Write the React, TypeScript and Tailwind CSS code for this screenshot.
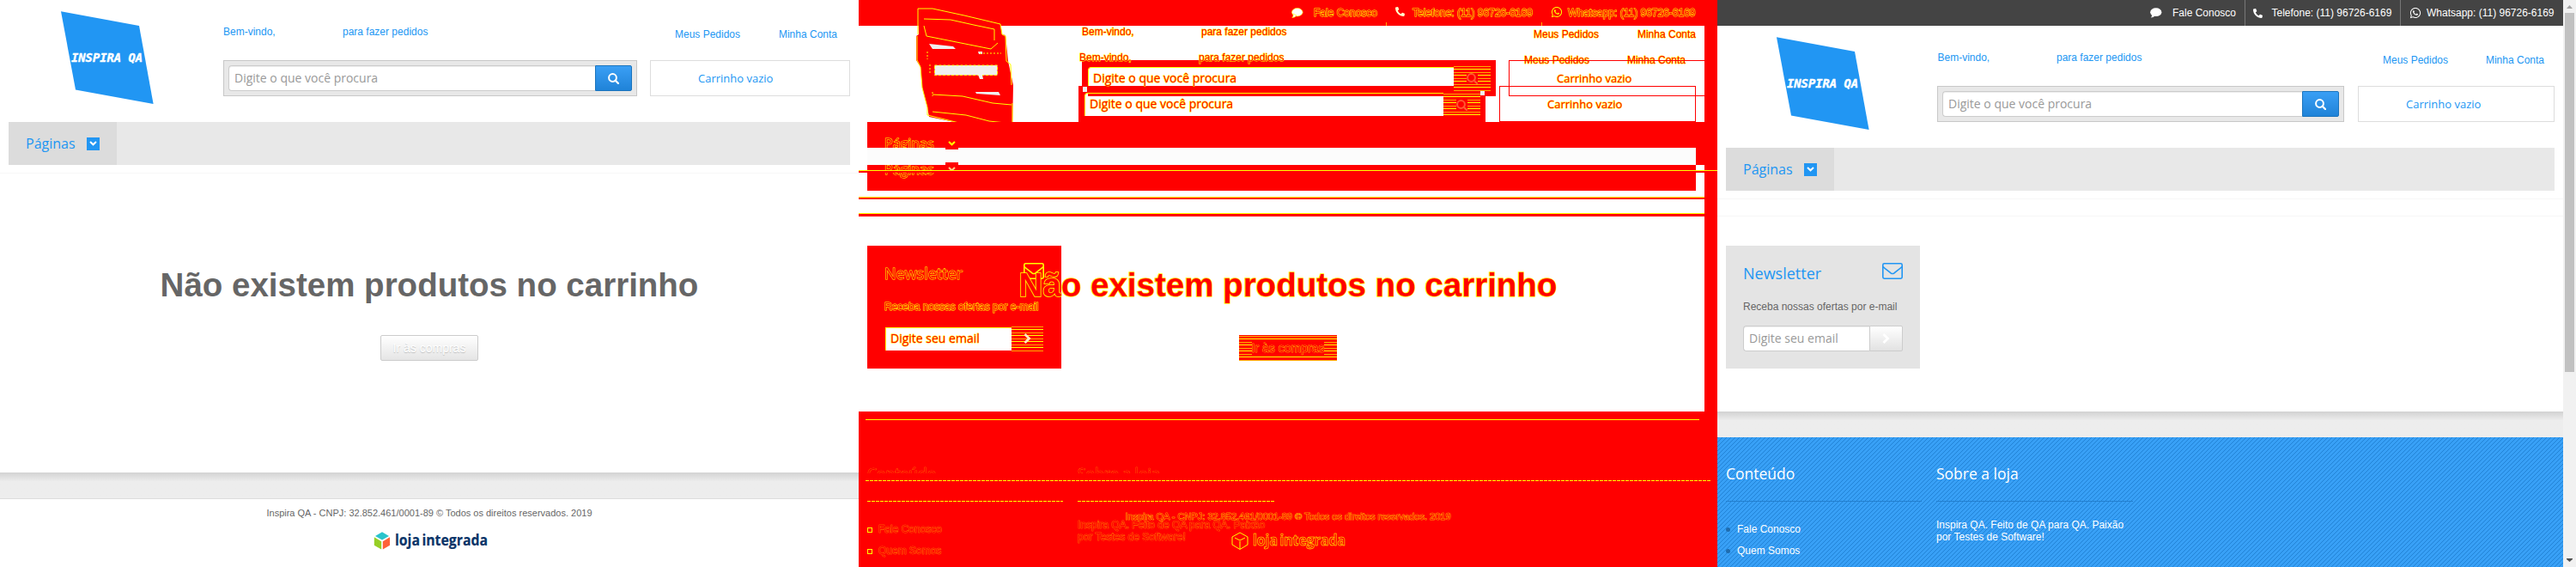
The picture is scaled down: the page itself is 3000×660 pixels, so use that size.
import React from "react";
import { FaPhoneAlt, FaWhatsapp } from "react-icons/fa";

const SANS = "font-['Liberation_Sans',Arial,sans-serif]";
const OPEN = "font-['Open_Sans','Noto_Sans',sans-serif]";

function StoreLogo({ className }: { className: string }) {
  return (
    <svg className={className} width="110" height="110" viewBox="0 0 110 110">
      <polygon points="0,0.3 91,17 107.6,108 17,91.5" fill="#2196f3" />
      <text
        x="12"
        y="58.5"
        textLength="83"
        lengthAdjust="spacingAndGlyphs"
        fontFamily="'DejaVu Sans Mono', monospace"
        fontWeight="bold"
        fontStyle="italic"
        fontSize="13.8"
        fill="#fff"
        stroke="#fff"
        strokeWidth="0.4"
      >
        INSPIRA QA
      </text>
    </svg>
  );
}

function SearchIcon({ color = "#fff" }: { color?: string }) {
  return (
    <svg width="13" height="13" viewBox="0 0 13 13" fill="none" stroke={color}>
      <circle cx="5.5" cy="5.5" r="4.4" strokeWidth="2" />
      <path d="M8.7 8.7 L12 12" strokeWidth="2.3" strokeLinecap="round" />
    </svg>
  );
}

function Chevron({ right = false, color = "#fff" }: { right?: boolean; color?: string }) {
  return right ? (
    <svg width="9" height="12" viewBox="0 0 9 12" fill="none" stroke={color} strokeWidth="2.8">
      <path d="M1.5 1 L6.6 6 L1.5 11" />
    </svg>
  ) : (
    <svg width="9" height="6" viewBox="0 0 9 6" fill="none" stroke={color} strokeWidth="2">
      <path d="M1 1 L4.5 4.3 L8 1" />
    </svg>
  );
}

function Envelope({ color }: { color: string }) {
  return (
    <svg width="24" height="19" viewBox="0 0 24 19" fill="none" stroke={color} strokeWidth="1.6">
      <rect x="0.8" y="0.8" width="22.4" height="17.4" rx="1.6" />
      <path d="M1 4.5 C4 7.5 8 10 10 11.8 Q12 13.2 14 11.8 C16 10 20 7.5 23 4.5" />
    </svg>
  );
}

function Brand({ outline = false }: { outline?: boolean }) {
  return (
    <svg width="134" height="26" viewBox="0 -3 134 26" className="block overflow-visible">
      {outline ? (
        <path d="M1 6 L10 1 L19 6 V15 L10 20.5 L1 15 Z M10 11 V20 M4 7 L10 10 L16 7" fill="none" stroke="#ff0" />
      ) : (
        <g>
          <polygon points="10,0.3 18,5 10,9.6 2,5" fill="#29c4cc" />
          <polygon points="0.8,6.3 9.2,11.2 9.2,20.5 0.8,15.8" fill="#97cf26" />
          <polygon points="19,6.3 10.8,11.2 10.8,20.5 19,15.8" fill="#ff6238" />
        </g>
      )}
      <text
        x="25"
        y="16"
        textLength="108"
        lengthAdjust="spacingAndGlyphs"
        fontFamily="'Open Sans', 'Noto Sans', sans-serif"
        fontWeight="bold"
        fontSize="18.5"
        wordSpacing="-2"
        fill={outline ? "none" : "#0a3468"}
        stroke={outline ? "#ff0" : "#0a3468"}
        strokeWidth={outline ? 0.6 : 0.2}
      >
        loja integrada
      </text>
    </svg>
  );
}

function StoreHeader({ shop }: { shop: boolean }) {
  return (
    <header>
      <div className="flex h-[142px] items-start">
        <div className={shop ? "w-[256px] pl-[69px] pt-[13px]" : "w-[260px] pl-[71px] pt-[13px]"}>
          <StoreLogo className="block" />
        </div>
        <div className={shop ? "w-[474px]" : "w-[482px]"}>
          <div className={`flex h-[70px] pt-[27px] text-xs leading-5 text-[#2196f3] ${SANS}`}>
            <span className={shop ? "w-[139px] pl-[0.5px]" : "w-[139px]"}>Bem-vindo,</span>
            <span>para fazer pedidos</span>
          </div>
          <div className="flex h-[42px] border border-[#c8c8c8] bg-[#e8e8e8] p-[5px]">
            <div
              className={`h-[30px] flex-1 rounded-l border border-r-0 border-[#ccc] bg-white pl-1.5 text-sm leading-[27px] text-[#999] shadow-[inset_0_1px_1px_rgba(0,0,0,0.075)] ${OPEN}`}
            >
              Digite o que você procura
            </div>
            <div className="flex h-[30px] w-[43px] items-center justify-center rounded-r-[2px] border border-[#1b74bd] bg-linear-to-b from-[#3a9ff5] to-[#1f83d8]">
              <SearchIcon />
            </div>
          </div>
        </div>
        <div className={shop ? "ml-4 w-[229px]" : "ml-[15px] w-[233px]"}>
          <div
            className={`flex h-[70px] justify-between pt-[30px] text-xs leading-5 text-[#2196f3] ${SANS} ${
              shop ? "pl-[29px] pr-[12px]" : "pl-[29px] pr-[15px]"
            }`}
          >
            <span>Meus Pedidos</span>
            <span>Minha Conta</span>
          </div>
          <div className={`h-[42px] border border-[#ddd] pl-[55px] text-[13px] leading-10 text-[#2196f3] ${OPEN}`}>
            Carrinho vazio
          </div>
        </div>
      </div>
      <nav className="mx-2.5 h-[50px] bg-[#e8e8e8]">
        <div className="flex h-full w-[126px] items-center bg-[#dcdcdc] pl-5">
          <span className={`w-[71px] text-base leading-[50px] text-[#2196f3] ${OPEN}`}>Páginas</span>
          <span className="flex h-[15px] w-[15px] items-center justify-center bg-[#2196f3]">
            <Chevron />
          </span>
        </div>
      </nav>
    </header>
  );
}

function CartPage() {
  return (
    <section className="flex h-full w-[1000px] flex-col bg-white">
      <StoreHeader shop={false} />
      <div className="h-[9px]" />
      <div className="flex h-[349px] shrink-0 flex-col items-center">
        <div className="h-px w-full bg-[#f7f7f7]" />
        <h1 className={`mt-[110px] text-[38.5px] font-bold leading-[40px] text-[#666] ${SANS}`}>
          Não existem produtos no carrinho
        </h1>
        <div
          className={`mt-[38px] h-[30px] w-[114px] rounded-[2px] border border-[#ccc] bg-linear-to-b from-white to-[#e5e5e5] text-center text-sm leading-7 text-white [text-shadow:0_1px_1px_rgba(0,0,0,0.2)] ${SANS}`}
        >
          Ir às compras
        </div>
      </div>
      <div className="h-[30px] shrink-0 bg-linear-to-b from-[#d2d2d2] via-[#ededed] via-35% to-[#ededed]" />
      <footer className="flex flex-1 flex-col items-center border-t border-[#ddd]">
        <p className={`mt-[6px] text-[11px] leading-5 text-[#666] ${SANS}`}>
          Inspira QA - CNPJ: 32.852.461/0001-89 © Todos os direitos reservados. 2019
        </p>
        <div className="ml-[3px] mt-[9px]">
          <Brand />
        </div>
      </footer>
    </section>
  );
}

function TopBar() {
  return (
    <div className={`flex h-[30px] items-center justify-end bg-[#444] text-xs leading-[30px] text-white ${SANS}`}>
      <div className="flex w-[111px] items-center">
        <svg width="14" height="12" viewBox="0 0 14 12" fill="#fff" className="ml-px">
          <ellipse cx="6.8" cy="5.2" rx="6.6" ry="4.9" />
          <path d="M2 7 Q2.5 10 0.8 11.6 Q4 11.5 6 9 Z" />
        </svg>
        <span className="ml-[12px]">Fale Conosco</span>
      </div>
      <div className="flex h-full w-[181px] items-center border-l border-[#777] pl-[9px]">
        <FaPhoneAlt size={11} />
        <span className="ml-[10.5px]">Telefone: (11) 96726-6169</span>
      </div>
      <div className="flex h-full w-[190px] items-center border-l border-[#777] pl-[10px]">
        <FaWhatsapp size={14} />
        <span className="ml-[6px]">Whatsapp: (11) 96726-6169</span>
      </div>
    </div>
  );
}

function Newsletter() {
  return (
    <aside className="ml-2.5 flex h-[143px] w-[226px] flex-col bg-[#e4e4e4] px-5">
      <div className="flex items-start justify-between pt-5">
        <span className={`text-lg leading-6 text-[#2196f3] ${OPEN}`}>Newsletter</span>
        <Envelope color="#2196f3" />
      </div>
      <p className={`mt-[17px] text-xs leading-5 text-[#666] ${SANS}`}>Receba nossas ofertas por e-mail</p>
      <div className="mt-[12px] flex h-[30px]">
        <div
          className={`w-[147px] rounded-l border border-r-0 border-[#ccc] bg-white pl-1.5 text-sm leading-[27px] text-[#999] shadow-[inset_0_1px_1px_rgba(0,0,0,0.075)] ${OPEN}`}
        >
          Digite seu email
        </div>
        <div className="flex w-[39px] items-center justify-center rounded-r-[2px] border border-[#ccc] bg-linear-to-b from-white to-[#e2e2e2]">
          <Chevron right />
        </div>
      </div>
    </aside>
  );
}

function FooterStripes() {
  return (
    <svg className="absolute inset-0 h-full w-full" shapeRendering="crispEdges">
      <defs>
        <pattern id="footer-stripes" width="5" height="5" patternUnits="userSpaceOnUse">
          <rect width="5" height="5" fill="#38a0f6" />
          <path d="M0 0h1v1h-1z M4 1h1v1h-1z M3 2h1v1h-1z M2 3h1v1h-1z M1 4h1v1h-1z" fill="#2283d6" />
        </pattern>
      </defs>
      <rect width="100%" height="100%" fill="url(#footer-stripes)" />
    </svg>
  );
}

function BlueFooter() {
  return (
    <footer className="relative flex-1 bg-[#38a0f6] text-white">
      <FooterStripes />
      <div className="relative flex gap-[17px] pl-2.5">
        <div className="w-[228px]">
          <h3 className={`mt-[30px] h-[44px] text-[17.5px] leading-6 ${OPEN}`}>Conteúdo</h3>
          <div className="h-px bg-[#2380cf]" />
          <ul className={`mt-[20px] text-xs leading-[25px] ${SANS}`}>
            <li className="flex h-[25px] items-center">
              <i className="mr-2 h-[5px] w-[5px] rounded-full bg-[#1f6cae]" />
              Fale Conosco
            </li>
            <li className="flex h-[25px] items-center">
              <i className="mr-2 h-[5px] w-[5px] rounded-full bg-[#1f6cae]" />
              Quem Somos
            </li>
          </ul>
        </div>
        <div className="w-[229px]">
          <h3 className={`mt-[30px] h-[44px] text-[17.5px] leading-6 ${OPEN}`}>Sobre a loja</h3>
          <div className="h-px bg-[#2380cf]" />
          <p className={`mt-[20px] text-xs leading-[14px] ${SANS}`}>
            Inspira QA. Feito de QA para QA. Paixão
            <br />
            por Testes de Software!
          </p>
        </div>
      </div>
    </footer>
  );
}

function ShopPage() {
  return (
    <section className="flex h-full w-[1000px]">
      <div className="flex w-[985px] flex-col bg-white">
        <TopBar />
        <StoreHeader shop />
        <div className="mt-[9px] h-px shrink-0 bg-[#f7f7f7]" />
        <div className="mt-[19px] h-px shrink-0 bg-[#f7f7f7]" />
        <div className="h-[227px] shrink-0 pt-[34px]">
          <Newsletter />
        </div>
        <div className="h-[30px] shrink-0 bg-linear-to-b from-[#d2d2d2] via-[#ededed] via-35% to-[#ededed]" />
        <BlueFooter />
      </div>
      <div className="flex w-[15px] flex-col items-center justify-between bg-[#f1f1f1]">
        <div className="flex flex-col items-center">
          <svg width="15" height="15" viewBox="0 0 15 15">
            <path d="M4 10 L7.5 6 L11 10 Z" fill="#a3a3a3" />
          </svg>
          <div className="h-[418px] w-[11px] bg-[#c1c1c1]" />
        </div>
        <svg width="15" height="15" viewBox="0 0 15 15">
          <path d="M4 5 H11 V6 L7.5 9 L4 6 Z" fill="#505050" />
        </svg>
      </div>
    </section>
  );
}

/* Free-canvas marks of the comparison: each one overlays the two page states. */
function Mark({ at, children }: { at: string; children?: React.ReactNode }) {
  return <div className={`absolute ${at}`}>{children}</div>;
}

const EDGE = "whitespace-nowrap text-[#f00] [-webkit-text-stroke:1px_#ff0] [paint-order:stroke_fill]";
const FAINT = "whitespace-nowrap text-[#f00] [-webkit-text-stroke:0.6px_#ff0] [paint-order:stroke_fill]";
const HATCH =
  "bg-[#f00] bg-[repeating-linear-gradient(180deg,#f00_0px,#f00_1px,#fa0_1px,#fa0_2px,#f00_2px,#f00_4px,#ff0_4px,#ff0_5px,#f00_5px,#f00_7px)]";

function DiffGreeting({ at }: { at: string }) {
  return (
    <Mark at={at}>
      <div className={`flex text-xs leading-5 ${EDGE} ${SANS}`}>
        <span className="w-[139px]">Bem-vindo,</span>
        <span>para fazer pedidos</span>
      </div>
    </Mark>
  );
}

function DiffAccount({ at }: { at: string }) {
  return (
    <Mark at={at}>
      <div className={`flex justify-between text-xs leading-5 ${EDGE} ${SANS}`}>
        <span>Meus Pedidos</span>
        <span>Minha Conta</span>
      </div>
    </Mark>
  );
}

function DiffPage() {
  return (
    <section className="relative h-full w-[1000px] overflow-hidden bg-white">
      <Mark at="left-0 top-0 h-[30px] w-full bg-[#f00]" />
      <Mark at="left-[985px] top-0 h-full w-[15px] bg-[#f00]" />
      <Mark at="left-[66px] top-[9px]">
        <svg width="116" height="146" viewBox="66 9 116 146" className="block">
          <polygon points="69,10 86,10 165,27 167,40 171,41 174,71 180,99 179,151 155,151 82,136 80,125 74,102 72,78 67,70 67,42 70,40" fill="#f00" />
          <path d="M69 40 V10 H86 L123 18 L165 28 L167 40 L171 42 L172 71 L177 75 L178 99 M68 42 V70 L72 78 L74 102 L80 125 V134 L121 144 L156 151 H179 V120 M76 22 L107 23 L134 29 L158 34 V47 M76 30 L79 42 L119 50 L154 57 L162 50 M86 110 L121 112 L156 120 L178 122 M86 130 L125 134 L152 141 L171 143" fill="none" stroke="#ff0" strokeWidth="1" />
          <path d="M82 51 L110 54 L113 57 H86 Z M136 107 H163 L165 111 L137 109 Z" fill="#f0f0f0" />
          <rect x="88.5" y="76" width="73" height="11.5" fill="#f0f0f0" stroke="#ff0" strokeDasharray="3 2" />
          <path d="M139 60 h5 v3 h-4 z M139 87 h5 l1 5 h-4 z" fill="#f0f0f0" />
          <path d="M80 60 V69 M83 75 V87 M86 107 V112 M141 62 H166" stroke="#ff0" strokeDasharray="2 2" />
        </svg>
      </Mark>

      <Mark at="left-[260px] top-[70px] h-[42px] w-[482px] bg-[#f00]" />
      <Mark at="left-[256px] top-[100px] h-[42px] w-[474px] bg-[#f00]" />
      <DiffGreeting at="left-[260px] top-[27px]" />
      <DiffGreeting at="left-[257px] top-[57px]" />
      <Mark at="left-[267px] top-[78px] h-[22px] w-[426px] rounded-tl border-l border-t border-[#ff0] bg-white" />
      <Mark at="left-[263px] top-[108px] h-[27px] w-[418px] rounded-tl border-l border-t border-[#ff0] bg-white" />
      <Mark at="left-[267px] top-[109px] h-[3px] w-[414px] bg-[#f00]" />
      <Mark at="left-[261px] top-[101px] h-[6px] w-[5px] bg-[#f0f0f0]" />
      <Mark at={`left-[273px] top-[76px] text-sm leading-[29px] ${EDGE} ${OPEN}`}>Digite o que você procura</Mark>
      <Mark at={`left-[269px] top-[106px] text-sm leading-[29px] ${EDGE} ${OPEN}`}>Digite o que você procura</Mark>
      <Mark at={`left-[693px] top-[76px] flex h-[30px] w-[43px] items-center justify-center ${HATCH}`}>
        <span className="bg-[#f00]">
          <SearchIcon color="#ff5a30" />
        </span>
      </Mark>
      <Mark at={`left-[681px] top-[108px] flex h-[28px] w-[43px] items-center justify-center ${HATCH}`}>
        <span className="bg-[#f00]">
          <SearchIcon color="#ff5a30" />
        </span>
      </Mark>
      <Mark at="left-[724px] top-[106px] h-[5px] w-[5px] bg-[#f0f0f0]" />

      <DiffAccount at="left-[786px] top-[30px] w-[189px]" />
      <DiffAccount at="left-[775px] top-[60px] w-[188px]" />
      <Mark at="left-[757px] top-[70px] h-[42px] w-[233px] border border-[#f00]" />
      <Mark at="left-[746px] top-[100px] h-[42px] w-[229px] border border-[#f00]" />
      <Mark at={`left-[813px] top-[71px] text-[13px] leading-10 ${EDGE} ${OPEN}`}>Carrinho vazio</Mark>
      <Mark at={`left-[802px] top-[101px] text-[13px] leading-10 ${EDGE} ${OPEN}`}>Carrinho vazio</Mark>

      <Mark at="left-[10px] top-[142px] h-[50px] w-[980px] bg-[#f00]" />
      <Mark at="left-[10px] top-[192px] h-[30px] w-[965px] bg-[#f00]" />
      <Mark at={`left-[30px] top-[142px] text-base leading-[50px] ${EDGE} ${OPEN}`}>Páginas</Mark>
      <Mark at={`left-[30px] top-[172px] text-base leading-[50px] ${EDGE} ${OPEN}`}>Páginas</Mark>
      <Mark at="left-[104px] top-[164px]">
        <Chevron color="#ff0" />
      </Mark>
      <Mark at="left-[104px] top-[194px]">
        <Chevron color="#fc8" />
      </Mark>
      <Mark at="left-[10px] top-[172px] flex h-[20px] w-[965px] flex-col justify-between bg-[#fcfcfc] pl-[91px]">
        <div className="h-[2px] w-[15px] bg-[#f00]" />
        <div className="h-[3px] w-[15px] bg-[#f00]" />
      </Mark>
      <Mark at="left-0 top-[198px] h-[3px] w-full border-t border-[#ff0] bg-[#f00]" />
      <Mark at="left-0 top-[229px] h-[3px] w-[985px] border-t border-[#ff0] bg-[#f00]" />
      <Mark at="left-0 top-[248px] h-[4px] w-[985px] border-t border-[#ff0] bg-[#f00]" />

      <Mark at="left-[10px] top-[286px] h-[143px] w-[226px] bg-[#f00]" />
      <Mark at={`left-[30px] top-[306px] text-lg leading-6 ${EDGE} ${OPEN}`}>Newsletter</Mark>
      <Mark at="left-[192px] top-[306px]">
        <Envelope color="#ff0" />
      </Mark>
      <Mark at={`left-[30px] top-[347px] text-xs leading-5 ${EDGE} ${SANS}`}>Receba nossas ofertas por e-mail</Mark>
      <Mark at="left-[31px] top-[381px] h-[27px] w-[147px] border-l border-t border-[#ff0] bg-white" />
      <Mark at={`left-[37px] top-[379px] text-sm leading-[29px] ${EDGE} ${OPEN}`}>Digite seu email</Mark>
      <Mark at={`left-[178px] top-[379px] flex h-[30px] w-[37px] items-center justify-center ${HATCH}`}>
        <Chevron right color="#ffe9c0" />
      </Mark>

      <Mark at="left-0 top-[325px] w-full text-center">
        <span
          className={`text-[38.5px] font-bold leading-[14px] text-[#f00] [-webkit-text-stroke:1.6px_#ff0] [paint-order:stroke_fill] ${SANS}`}
        >
          Não existem produtos no carrinho
        </span>
      </Mark>
      <Mark at={`left-[443px] top-[390px] flex h-[30px] w-[114px] items-center justify-center ${HATCH}`}>
        <span className={`bg-[#f00] text-sm leading-4 ${FAINT} ${SANS}`}>Ir às compras</span>
      </Mark>

      <Mark at="left-0 top-[479px] h-[181px] w-full bg-[#f00]" />
      <Mark at="left-[8px] top-[488px] h-px w-[971px] bg-[#ff0]" />
      <Mark at={`left-[10px] top-[539px] text-[17.5px] leading-6 opacity-50 ${FAINT} ${OPEN}`}>Conteúdo</Mark>
      <Mark at={`left-[255px] top-[539px] text-[17.5px] leading-6 opacity-50 ${FAINT} ${OPEN}`}>Sobre a loja</Mark>
      <Mark at="left-0 top-[551px] h-[14px] w-full bg-[#f00]" />
      <Mark at="left-[8px] top-[559px] h-px w-[985px] bg-[repeating-linear-gradient(90deg,#ff0_0px,#ff0_4px,#f00_4px,#f00_5px)]" />
      <Mark at="left-[10px] top-[583px] h-px w-[228px] bg-[repeating-linear-gradient(90deg,#ff0_0px,#ff0_4px,#f00_4px,#f00_5px)]" />
      <Mark at="left-[255px] top-[583px] h-px w-[229px] bg-[repeating-linear-gradient(90deg,#ff0_0px,#ff0_4px,#f00_4px,#f00_5px)]" />
      <Mark at="left-[10px] top-[614px] h-[6px] w-[6px] border border-[#ff0]" />
      <Mark at="left-[10px] top-[639px] h-[6px] w-[6px] border border-[#ff0]" />
      <Mark at={`left-[23px] top-[606px] text-xs leading-5 opacity-60 ${FAINT} ${SANS}`}>Fale Conosco</Mark>
      <Mark at={`left-[23px] top-[631px] text-xs leading-5 opacity-60 ${FAINT} ${SANS}`}>Quem Somos</Mark>
      <Mark at={`left-[255px] top-[604px] text-xs leading-[14px] opacity-60 ${FAINT} ${SANS}`}>
        Inspira QA. Feito de QA para QA. Paixão
        <br />
        por Testes de Software!
      </Mark>
      <Mark at="left-0 top-[587px] w-full text-center">
        <span className={`text-[11px] leading-5 ${FAINT} ${SANS}`}>
          Inspira QA - CNPJ: 32.852.461/0001-89 © Todos os direitos reservados. 2019
        </span>
      </Mark>
      <Mark at="left-[434px] top-[616px]">
        <Brand outline />
      </Mark>

      <Mark at="left-[504px] top-[9px]">
        <svg width="14" height="12" viewBox="0 0 14 12" fill="#fff" stroke="#ff0" strokeWidth="0.6" className="block">
          <ellipse cx="6.8" cy="5.2" rx="6.3" ry="4.7" />
          <path d="M2 7 Q2.5 10 0.8 11.6 Q4 11.5 6 9 Z" />
        </svg>
      </Mark>
      <Mark at={`left-[530px] top-[5px] text-xs leading-5 ${EDGE} ${SANS}`}>Fale Conosco</Mark>
      <Mark at="left-[625px] top-[8px] text-[#ffc]">
        <FaPhoneAlt size={11} />
      </Mark>
      <Mark at={`left-[645px] top-[5px] text-xs leading-5 ${EDGE} ${SANS}`}>Telefone: (11) 96726-6169</Mark>
      <Mark at="left-[806px] top-[7px] text-[#ff0]">
        <FaWhatsapp size={14} />
      </Mark>
      <Mark at={`left-[826px] top-[5px] text-xs leading-5 ${EDGE} ${SANS}`}>Whatsapp: (11) 96726-6169</Mark>
      <Mark at="left-[614px] top-[26px] h-[4px] w-px bg-[#fa0]" />
      <Mark at="left-[795px] top-[26px] h-[4px] w-px bg-[#fa0]" />
    </section>
  );
}

export default function App() {
  return (
    <main className="flex h-[660px] w-[3000px] overflow-hidden bg-white">
      <CartPage />
      <DiffPage />
      <ShopPage />
    </main>
  );
}
